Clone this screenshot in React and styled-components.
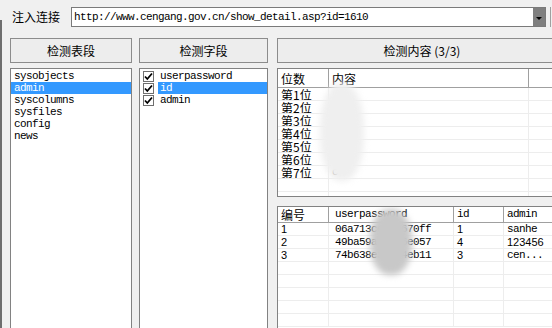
import React from 'react';
import styled, { createGlobalStyle } from 'styled-components';

const Global = createGlobalStyle`
	html, body {
		margin: 0;
		padding: 0;
		background: #f0f0f0;
	}
	body {
		width: 552px;
		height: 328px;
		overflow: hidden;
		font-family: "Liberation Mono", "Noto Sans CJK SC", monospace;
		font-size: 11px;
		color: #000;
	}
`;

const mono = `"Liberation Mono", "Noto Sans CJK SC", monospace`;
const cjk = `"Noto Sans CJK SC", "Liberation Sans", sans-serif`;

const Page = styled.div`
	display: flex;
	width: 552px;
	height: 328px;
	overflow: hidden;
`;

const Edge = styled.div`
	width: 2px;
	margin-top: 20px;
	background: #6e6e6e;
	flex-shrink: 0;
`;

const Content = styled.div`
	flex: 1;
	min-width: 0;
	display: flex;
	flex-direction: column;
`;

//Top url bar
const TopBar = styled.div`
	display: flex;
	align-items: center;
	height: 34px;
	flex-shrink: 0;
	padding-left: 10px;
`;

const Label = styled.span`
	font-family: ${cjk};
	font-size: 12px;
	width: 59px;
	line-height: 14px;
`;

const UrlBox = styled.div`
	display: flex;
	height: 20px;
	width: 475px;
	box-sizing: border-box;
	border: 1px solid #7a7a7a;
	background: #fff;
`;

const UrlText = styled.div`
	flex: 1;
	font-family: ${mono};
	font-size: 11px;
	letter-spacing: -0.6px;
	line-height: 18px;
	padding-left: 2px;
	white-space: nowrap;
	overflow: hidden;
`;

const DropButton = styled.div`
	width: 12px;
	background: #7f7f7f;
	display: flex;
	align-items: center;
	justify-content: center;

	&::after {
		content: '';
		border-left: 3px solid transparent;
		border-right: 3px solid transparent;
		border-top: 3px solid #000;
		margin-top: 2px;
	}
`;

const Stub = styled.div`
	width: 1px;
	height: 20px;
	margin-left: 4px;
	background: #a0a0a0;
`;

//Columns
const Main = styled.div`
	display: flex;
	padding-left: 8px;
	padding-top: 4px;
	gap: 7px;
	flex-shrink: 0;
`;

const Column = styled.div`
	display: flex;
	flex-direction: column;
	gap: 5px;
	width: ${(p) => p.w}px;
	margin-left: ${(p) => p.ml || 0}px;
	flex-shrink: 0;
`;

const Button = styled.div`
	height: 25px;
	flex-shrink: 0;
	box-sizing: border-box;
	border: 1px solid #8c8c8c;
	background: #ededed;
	display: flex;
	align-items: center;
	justify-content: center;
	font-family: ${cjk};
	font-size: 12px;
	${(p) => p.wide && 'width: 290px;'}
`;

const ListBox = styled.div`
	height: 280px;
	flex-shrink: 0;
	box-sizing: border-box;
	border: 1px solid #828282;
	background: #fff;
	padding-top: 1px;
`;

const Item = styled.div`
	height: 12px;
	line-height: 12px;
	font-family: ${mono};
	font-size: 11px;
	letter-spacing: -0.6px;
	padding-left: 3px;
	color: ${(p) => (p.sel ? '#fff' : '#000')};
	background: ${(p) => (p.sel ? '#3399ff' : 'transparent')};
	white-space: nowrap;
`;

const CheckRow = styled.div`
	display: flex;
	align-items: center;
	height: 12px;
	padding-left: 3px;
`;

const Box = styled.div`
	width: 9px;
	height: 9px;
	border: 1px solid #6f6f6f;
	background: #fff;
	display: flex;
	align-items: center;
	justify-content: center;
	flex-shrink: 0;
`;

const CheckLabel = styled(Item)`
	flex: 1;
	margin-left: 4px;
	padding-left: 2px;
`;

//Grids
const Grid = styled.div`
	position: relative;
	height: ${(p) => p.h}px;
	width: 290px;
	flex-shrink: 0;
	box-sizing: border-box;
	border: 1px solid #828282;
	background: #fff;
	overflow: hidden;
	margin-top: ${(p) => p.mt || 0}px;
`;

const Row = styled.div`
	display: flex;
	height: ${(p) => p.h}px;
	box-sizing: border-box;
	border-bottom: 1px solid ${(p) => (p.head ? '#a0a0a0' : '#ededed')};
`;

const Cell = styled.div`
	width: ${(p) => p.w}px;
	flex-shrink: 0;
	box-sizing: border-box;
	border-right: 1px solid ${(p) => (p.head ? '#a0a0a0' : '#ededed')};
	padding-left: ${(p) => (p.pad != null ? p.pad : 3)}px;
	white-space: nowrap;
	overflow: hidden;
	font-family: ${(p) => (p.cn ? cjk : p.num ? '"Liberation Sans", sans-serif' : mono)};
	font-size: ${(p) => (p.cn ? 12 : 11)}px;
	letter-spacing: ${(p) => (p.cn || p.num ? 0 : -0.6)}px;
	line-height: ${(p) => p.lh}px;
`;

const Blob = styled.div`
	position: absolute;
	left: ${(p) => p.x}px;
	top: ${(p) => p.y}px;
	width: ${(p) => p.w}px;
	height: ${(p) => p.h}px;
	border-radius: 45%;
	background: ${(p) => p.c};
	filter: blur(3px);
`;

const Check = () => (
	<svg width="9" height="9" viewBox="0 0 9 9">
		<path d="M1 4.5 L3.3 7 L8 1.5" fill="none" stroke="#000" strokeWidth="1.8" />
	</svg>
);

const tables = ['sysobjects', 'admin', 'syscolumns', 'sysfiles', 'config', 'news'];
const fields = ['userpassword', 'id', 'admin'];
const bits = ['第1位', '第2位', '第3位', '第4位', '第5位', '第6位', '第7位', '', ''];
const rows = [
	['1', '06a713ce5d3670ff', '1', 'sanhe'],
	['2', '49ba59abbe56e057', '4', '123456'],
	['3', '74b638e3f4a4eb11', '3', 'cen...'],
	['', '', '', ''],
	['', '', '', ''],
	['', '', '', ''],
	['', '', '', ''],
	['', '', '', ''],
];

const App = () => {
	return (
		<Page>
			<Global />
			<Edge />
			<Content>
				<TopBar>
					<Label>注入连接</Label>
					<UrlBox>
						<UrlText>http://www.cengang.gov.cn/show_detail.asp?id=1610</UrlText>
						<DropButton />
					</UrlBox>
					<Stub />
				</TopBar>
				<Main>
					<Column w={122}>
						<Button>检测表段</Button>
						<ListBox>
							{tables.map((t) => (
								<Item key={t} sel={t === 'admin'}>{t}</Item>
							))}
						</ListBox>
					</Column>
					<Column w={129}>
						<Button>检测字段</Button>
						<ListBox>
							{fields.map((f) => (
								<CheckRow key={f}>
									<Box><Check /></Box>
									<CheckLabel sel={f === 'id'}>{f}</CheckLabel>
								</CheckRow>
							))}
						</ListBox>
					</Column>
					<Column w={290} ml={2}>
						<Button wide>检测内容 (3/3)</Button>
						<Grid h={129}>
							<Row head h={19}>
								<Cell head cn w={51} lh={19}>位数</Cell>
								<Cell head cn w={200} lh={19}>内容</Cell>
								<Cell head w={40} lh={18} />
							</Row>
							{bits.map((b, i) => (
								<Row key={i} h={13}>
									<Cell cn w={51} lh={13}>{b}</Cell>
									<Cell w={200} lh={13}>{i === 6 ? 'c' : ''}</Cell>
									<Cell w={40} lh={13} />
								</Row>
							))}
							<Blob x={42} y={14} w={44} h={98} c="#efefef" />
						</Grid>
						<Grid h={130} mt={4}>
							<Row head h={16}>
								<Cell head cn w={51} lh={15}>编号</Cell>
								<Cell head w={125} lh={15} pad={6}>userpassword</Cell>
								<Cell head w={50} lh={15}>id</Cell>
								<Cell head w={60} lh={15}>admin</Cell>
							</Row>
							{rows.map((r, i) => (
								<Row key={i} h={13}>
									<Cell num w={51} lh={13}>{r[0]}</Cell>
									<Cell w={125} lh={13} pad={6}>{r[1]}</Cell>
									<Cell num w={50} lh={13}>{r[2]}</Cell>
									<Cell num={r[3] === '123456'} w={60} lh={13}>{r[3]}</Cell>
								</Row>
							))}
							<Blob x={92} y={2} w={42} h={66} c="#c8c8c8" />
						</Grid>
					</Column>
				</Main>
			</Content>
		</Page>
	);
};

export default App;
